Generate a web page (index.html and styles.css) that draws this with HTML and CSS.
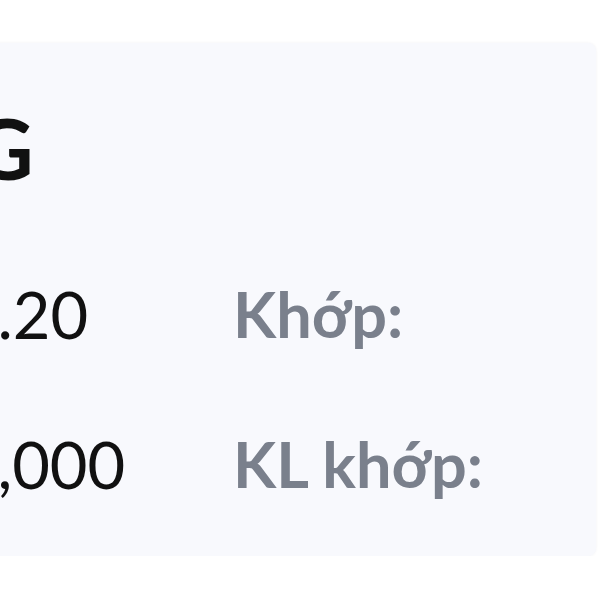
FILE: index.html
```html
<!DOCTYPE html>
<html lang="vi">
<head>
    <meta charset="UTF-8">
    <meta name="viewport" content="width=device-width, initial-scale=1.0">
    <title>Lệnh khớp</title>
    <link rel="stylesheet" href="styles.css">
</head>
<body>
    <div class="card">
        <h1 class="ticker">HPG</h1>
        <div class="rows">
            <div class="value">25.20</div>
            <div class="label">Khớp:</div>
            <div class="value">10,000</div>
            <div class="label">KL khớp:</div>
        </div>
    </div>
</body>
</html>
```

FILE: styles.css
```css
body {
    margin: 0;
    padding: 0;
    background: #fff;
    font-family: Lato, "Noto Sans", sans-serif;
    overflow: hidden;
}

.card {
    margin: 43px 0 0 -120px;
    width: 716px;
    height: 513px;
    box-sizing: border-box;
    padding: 0 0 0 42px;
    background: #f8f9fd;
    border-radius: 0 8px 8px 0;
    box-shadow: 0 0 3px rgba(20, 30, 80, 0.06);
}

.ticker {
    margin: 0 0 0 -68px;
    padding-top: 62px;
    font-size: 85px;
    font-weight: 700;
    line-height: 1;
    color: #111;
}

.rows {
    display: grid;
    grid-template-columns: 311px 1fr;
    grid-auto-rows: 150px;
    margin-top: 49px;
    font-size: 65px;
    line-height: 150px;
}

.value {
    color: #111;
}

.label {
    color: #7a808c;
    font-weight: 700;
    font-size: 63px;
}
```
